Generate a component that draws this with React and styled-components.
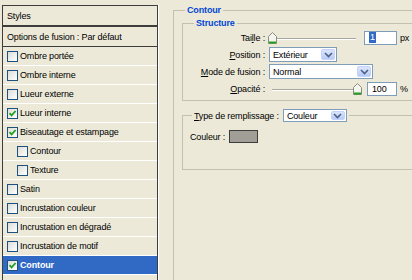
import React from "react";
import styled, { createGlobalStyle } from "styled-components";

const GlobalStyle = createGlobalStyle`
  html, body {
    margin: 0;
    padding: 0;
    background: #ece9d8;
  }
  body {
    font-family: "Liberation Sans", Arial, sans-serif;
    font-size: 9px;
    letter-spacing: -0.15px;
    color: #000;
  }
`;

const effects = [
  { label: "Ombre portée" },
  { label: "Ombre interne" },
  { label: "Lueur externe" },
  { label: "Lueur interne", checked: true },
  { label: "Biseautage et estampage", checked: true },
  { label: "Contour", indent: true },
  { label: "Texture", indent: true },
  { label: "Satin" },
  { label: "Incrustation couleur" },
  { label: "Incrustation en dégradé" },
  { label: "Incrustation de motif" },
  { label: "Contour", checked: true, active: true },
];

const Check = ({ checked }) => (
  <CheckBox>
    {checked && (
      <svg width="9" height="9" viewBox="0 0 9 9">
        <path d="M1.5 4.2 L3.6 6.4 L7.6 2" fill="none" stroke="#21a121" strokeWidth="1.8" />
      </svg>
    )}
  </CheckBox>
);

const Arrow = () => (
  <DropButton>
    <svg width="9" height="6" viewBox="0 0 9 6">
      <path d="M1 1 L4.5 4.5 L8 1" fill="none" stroke="#4d6185" strokeWidth="1.6" />
    </svg>
  </DropButton>
);

const Slider = ({ width, pos }) => (
  <SliderBox $w={width}>
    <Thumb style={{ left: pos }} width="9" height="12" viewBox="0 0 9 12">
      <path d="M0.5 11.5 V4.5 L4.5 0.5 L8.5 4.5 V11.5 Z" fill="#f5f5f0" stroke="#8c8b80" />
      <path d="M1 10.5 H8" stroke="#21a121" strokeWidth="2" />
    </Thumb>
  </SliderBox>
);

export default function App() {
  return (
    <Page>
      <GlobalStyle />
      <StylesPanel>
        <PanelHeader $thick>Styles</PanelHeader>
        <PanelHeader>Options de fusion : Par défaut</PanelHeader>
        {effects.map((el, i) => (
          <EffectRow key={i} $indent={el.indent} $active={el.active}>
            <Check checked={el.checked} />
            {el.label}
          </EffectRow>
        ))}
      </StylesPanel>

      <Settings>
        <Group>
          <Legend>Contour</Legend>
          <SubGroup>
            <Legend>Structure</Legend>
            <FieldGrid>
              <Label>
                Tai<u>l</u>le :
              </Label>
              <Controls>
                <Slider width={92} pos={0} />
                <TextInput $w={33} $ml={4}>
                  <Selected>1</Selected>
                </TextInput>
                <Unit>px</Unit>
              </Controls>

              <Label>
                <u>P</u>osition :
              </Label>
              <Controls>
                <Select $w={68}>
                  Extérieur
                  <Arrow />
                </Select>
              </Controls>

              <Label>
                <u>M</u>ode de fusion :
              </Label>
              <Controls>
                <Select $w={104}>
                  Normal
                  <Arrow />
                </Select>
              </Controls>

              <Label>
                <u>O</u>pacité :
              </Label>
              <Controls>
                <Slider width={94} pos={85} />
                <TextInput $w={30} $ml={5}>
                  100
                </TextInput>
                <Unit>%</Unit>
              </Controls>
            </FieldGrid>
          </SubGroup>

          <FillGroup>
            <FillLegend>
              <LegendRow>
                <span>
                  <u>T</u>ype de remplissage :
                </span>
                <Select $w={64} $h={13}>
                  Couleur
                  <Arrow />
                </Select>
              </LegendRow>
            </FillLegend>
            <ColorRow>
              Couleur :
              <Swatch />
            </ColorRow>
          </FillGroup>
        </Group>
      </Settings>
    </Page>
  );
}

const Page = styled.div`
  display: flex;
  width: 412px;
  height: 280px;
  overflow: hidden;
  background: #ece9d8;
`;

const StylesPanel = styled.div`
  flex-shrink: 0;
  align-self: flex-start;
  margin: 5px 0 0 2px;
  width: 154px;
  min-height: 300px;
  border: 1px solid #3d3d3d;
  border-bottom: 0;
  box-shadow: 1px 0 0 #fff;
`;

const PanelHeader = styled.div`
  display: flex;
  align-items: center;
  height: 19px;
  padding-left: 4px;
  border-bottom: ${(p) => (p.$thick ? 2 : 1)}px solid #3d3d3d;
`;

const EffectRow = styled.div`
  display: flex;
  align-items: center;
  gap: 2px;
  height: 18px;
  padding-left: ${(p) => (p.$indent ? 14 : 4)}px;
  border-bottom: 1px solid #fff;
  background: ${(p) => (p.$active ? "#316ac5" : "transparent")};
  color: ${(p) => (p.$active ? "#fff" : "#000")};
  font-weight: ${(p) => (p.$active ? "bold" : "normal")};
`;

const CheckBox = styled.span`
  display: flex;
  align-items: center;
  justify-content: center;
  width: 9px;
  height: 9px;
  border: 1px solid #1c5180;
  background: linear-gradient(135deg, #dcdcd7, #ffffff);
`;

const Settings = styled.div`
  flex: 1;
  padding: 5px 0 0 15px;
  overflow: hidden;
`;

const Group = styled.fieldset`
  width: 260px;
  min-height: 300px;
  margin: 0;
  padding: 0 8px;
  border: 1px solid #c3c0b2;
  box-sizing: border-box;
`;

const Legend = styled.legend`
  margin-left: 3px;
  padding: 0 2px;
  line-height: 11px;
  font-weight: bold;
  font-size: 9px;
  color: #0046d5;
`;

const SubGroup = styled.fieldset`
  margin: 2px 0 0;
  padding: 1px 8px 4px;
  border: 1px solid #c3c0b2;
`;

const FieldGrid = styled.div`
  display: grid;
  grid-template-columns: 74px 1fr;
  column-gap: 4px;
  row-gap: 2px;
`;

const Label = styled.div`
  display: flex;
  align-items: center;
  justify-content: flex-end;
  height: 15px;
  white-space: nowrap;
`;

const Controls = styled.div`
  display: flex;
  align-items: center;
  height: 15px;
`;

const SliderBox = styled.div`
  position: relative;
  width: ${(p) => p.$w}px;
  height: 12px;
  margin-left: -1px;

  &::before {
    content: "";
    position: absolute;
    left: 4px;
    right: 4px;
    top: 6px;
    border-top: 1px solid #a9a79b;
    border-bottom: 1px solid #fff;
  }
`;

const Thumb = styled.svg`
  position: absolute;
  top: 0;
`;

const TextInput = styled.div`
  display: flex;
  align-items: center;
  width: ${(p) => p.$w}px;
  height: 14px;
  margin-left: ${(p) => p.$ml}px;
  padding-left: 4px;
  box-sizing: border-box;
  border: 1px solid #7f9db9;
  background: #fff;
`;

const Selected = styled.span`
  background: #316ac5;
  color: #fff;
  padding: 0 1px;
  line-height: 11px;
`;

const Unit = styled.span`
  margin-left: 3px;
`;

const Select = styled.div`
  display: flex;
  align-items: center;
  justify-content: space-between;
  width: ${(p) => p.$w}px;
  height: ${(p) => p.$h || 15}px;
  padding: 0 1px 0 3px;
  box-sizing: border-box;
  border: 1px solid #7f9db9;
  background: #fff;
  font-weight: normal;
  color: #000;
`;

const DropButton = styled.span`
  display: flex;
  align-items: center;
  justify-content: center;
  width: 14px;
  height: calc(100% - 2px);
  border-radius: 2px;
  background: linear-gradient(#dbe5fc, #b8cbf6);
  border: 1px solid #c3d3fd;
  box-sizing: border-box;
`;

const FillGroup = styled.fieldset`
  margin: 8px 0 0;
  padding: 0 7px 26px;
  border: 1px solid #c3c0b2;
`;

const FillLegend = styled.legend`
  margin-left: 2px;
  padding: 0 2px;
`;

const LegendRow = styled.span`
  display: inline-flex;
  align-items: center;
  gap: 4px;
`;

const ColorRow = styled.div`
  display: flex;
  align-items: center;
  gap: 4px;
  margin-top: 8px;
  height: 13px;
  margin-left: 0;
`;

const Swatch = styled.span`
  width: 29px;
  height: 13px;
  box-sizing: border-box;
  border: 1px solid #3d3d3d;
  background: #a19e97;
`;
